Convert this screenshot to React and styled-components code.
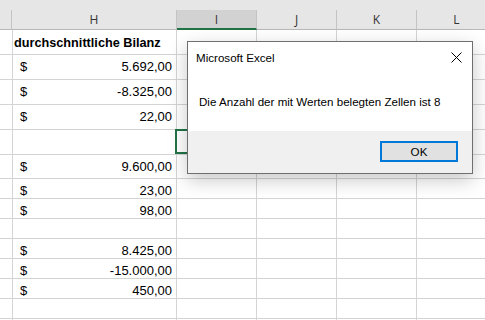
import React from "react";
import styled, { createGlobalStyle } from "styled-components";

const Global = createGlobalStyle`
  html, body { margin: 0; padding: 0; background: #ffffff; overflow: hidden; }
  #root { width: 485px; height: 320px; position: relative; overflow: hidden; }
`;

const Sheet = styled.div`
  position: relative;
  width: 485px;
  height: 320px;
  overflow: hidden;
  background: #ffffff;
  font-family: "Liberation Sans", Arial, sans-serif;
`;

const TopStrip = styled.div`
  height: 10px;
  background: #e6e6e6;
`;

const Grid = styled.div`
  display: grid;
  grid-template-columns: 12px 165px 80px 80px 80px 80px;
  width: 497px;
`;

const HeaderCell = styled.div`
  box-sizing: border-box;
  height: 20px;
  background: ${(p) => (p.$active ? "#d2d2d2" : "#e6e6e6")};
  border-right: 1px solid #c4c4c4;
  border-bottom: ${(p) => (p.$active ? "2px solid #217346" : "1px solid #b8b8b8")};
  color: #333;
  font-family: "Open Sans", "Noto Sans", sans-serif;
  font-size: 12px;
  display: flex;
  align-items: center;
  justify-content: center;
  padding-top: ${(p) => (p.$active ? "1px" : "0")};
`;

const Cell = styled.div`
  box-sizing: border-box;
  position: relative;
  height: ${(p) => p.$h}px;
  border-right: 1px solid #d4d4d4;
  border-bottom: 1px solid #d4d4d4;
  display: flex;
  align-items: flex-start;
  padding: 4px 4px 0 8px;
  font-size: 13px;
  line-height: 16px;
  color: #000;
  white-space: nowrap;
`;

const Title = styled.span`
  font-weight: bold;
  margin-left: -6px;
  margin-top: 1px;
  font-size: 12.7px;
`;

const Currency = styled.span`
  flex: 1;
`;

const Amount = styled.span`
  text-align: right;
`;

const Selection = styled.div`
  position: absolute;
  top: -1px;
  left: -2px;
  right: -1px;
  bottom: 0;
  border: 2px solid #217346;
  pointer-events: none;
`;

const Dialog = styled.div`
  position: absolute;
  left: 187px;
  top: 41px;
  width: 286px;
  height: 133px;
  box-sizing: border-box;
  border: 1px solid #6f6f6f;
  background: #ffffff;
  box-shadow: 0 6px 18px rgba(0, 0, 0, 0.22);
  display: flex;
  flex-direction: column;
  font-family: "Liberation Sans", Arial, sans-serif;
  font-size: 11.6px;
  color: #000;
`;

const TitleBar = styled.div`
  height: 30px;
  display: flex;
  align-items: center;
  justify-content: space-between;
  padding: 0 10px 0 8px;
`;

const CloseIcon = styled.svg`
  width: 11px;
  height: 11px;
  display: block;
`;

const Body = styled.div`
  height: 59px;
  display: flex;
  align-items: center;
  padding-left: 11px;
`;

const Footer = styled.div`
  flex: 1;
  background: #f0f0f0;
  display: flex;
  justify-content: flex-end;
  align-items: flex-start;
  padding: 10px 14px 0 0;
`;

const OkButton = styled.button`
  box-sizing: border-box;
  width: 78px;
  height: 21px;
  border: 2px solid #0078d7;
  background: #e1e1e1;
  font-family: "Liberation Sans", Arial, sans-serif;
  font-size: 11.6px;
  color: #000;
  padding: 0;
  display: flex;
  align-items: center;
  justify-content: center;
`;

const columns = ["", "H", "I", "J", "K", "L"];

const rows = [
  { h: 25, title: "durchschnittliche Bilanz" },
  { h: 25, v: "5.692,00" },
  { h: 25, v: "-8.325,00" },
  { h: 25, v: "22,00" },
  { h: 25, sel: true },
  { h: 24, v: "9.600,00" },
  { h: 20, v: "23,00" },
  { h: 20, v: "98,00" },
  { h: 20 },
  { h: 20, v: "8.425,00" },
  { h: 20, v: "-15.000,00" },
  { h: 20, v: "450,00" },
  { h: 20 },
  { h: 20 },
];

export default function App() {
  return (
    <>
      <Global />
      <Sheet>
        <TopStrip />
        <Grid>
          {columns.map((c, i) => (
            <HeaderCell key={"h" + i} $active={c === "I"}>
              {c}
            </HeaderCell>
          ))}
          {rows.map((r, ri) =>
            columns.map((c, ci) => (
              <Cell key={ri + "-" + ci} $h={r.h}>
                {c === "H" && r.title && <Title>{r.title}</Title>}
                {c === "H" && r.v && (
                  <>
                    <Currency>$</Currency>
                    <Amount>{r.v}</Amount>
                  </>
                )}
                {c === "I" && r.sel && <Selection />}
              </Cell>
            ))
          )}
        </Grid>
        <Dialog>
          <TitleBar>
            <span>Microsoft Excel</span>
            <CloseIcon viewBox="0 0 11 11">
              <path d="M0.5 0.5 L10.5 10.5 M10.5 0.5 L0.5 10.5" stroke="#000" strokeWidth="1" fill="none" />
            </CloseIcon>
          </TitleBar>
          <Body>Die Anzahl der mit Werten belegten Zellen ist 8</Body>
          <Footer>
            <OkButton>OK</OkButton>
          </Footer>
        </Dialog>
      </Sheet>
    </>
  );
}
